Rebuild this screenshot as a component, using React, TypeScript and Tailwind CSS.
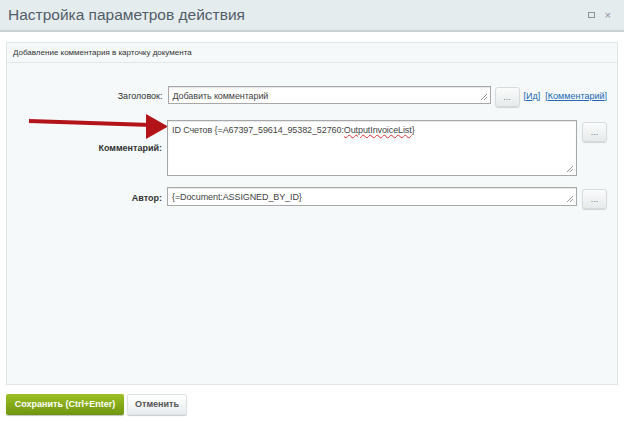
import React from "react";

const font = { fontFamily: '"Liberation Sans", Arial, sans-serif' };

function Grip() {
  return (
    <svg width="8" height="8" viewBox="0 0 8 8" className="absolute bottom-[2px] right-[2px]">
      <path d="M7 1 L1 7 M7 4 L4 7" stroke="#9a9a9a" strokeWidth="1" />
    </svg>
  );
}

function DotsButton() {
  return (
    <button className="flex h-[20px] w-[25px] shrink-0 items-center justify-center rounded-[3px] border border-[#d6dbdd] bg-gradient-to-b from-[#fbfcfc] to-[#e6eaeb] text-[9px] leading-none text-[#777] shadow-[0_1px_1px_rgba(0,0,0,0.15)]">
      ...
    </button>
  );
}

function Field({ h, children }: { h: string; children: React.ReactNode }) {
  return (
    <div
      className={`relative ${h} flex-1 border border-[#a8a8a8] bg-white px-[4px] pt-[3px] text-[9px] tracking-[-0.1px] text-[#444] shadow-[inset_0_1px_1px_rgba(0,0,0,0.1)]`}
    >
      {children}
      <Grip />
    </div>
  );
}

export default function App() {
  return (
    <div className="h-[421px] w-[624px] overflow-hidden bg-white" style={font}>
      {/* window header */}
      <div className="flex h-[32px] items-center justify-between border-b-2 border-[#c9d1d4] bg-[#e4ecee] pl-[8px] pr-[13px]">
        <span className="text-[15.5px] text-[#535c69]">Настройка параметров действия</span>
        <div className="flex items-center gap-[10px] text-[#8c9396]">
          <span className="block h-[6px] w-[7px] border border-[#8c9396]" />
          <span className="text-[11px] leading-none">×</span>
        </div>
      </div>

      <div className="px-[6px] pt-[10px]">
        <div className="h-[343px] border border-[#e1e7e9] bg-[#f5f9fa]">
          <div className="flex h-[20px] items-center border-b border-[#e1e7e9] pl-[6px] text-[8px] text-[#333]">
            Добавление комментария в карточку документа
          </div>

          <div className="relative flex flex-col pr-[10px] pt-[23px]">
            {/* red arrow */}
            <svg width="140" height="30" viewBox="0 0 140 30" className="absolute left-[22px] top-[50px]">
              <path d="M0 8 L122 12" stroke="#b3141a" strokeWidth="4" strokeLinecap="round" />
              <path d="M117 1 L139 13.5 L117 26 Z" fill="#b3141a" />
            </svg>

            <div className="flex items-start">
              <div className="w-[161px] pr-[5px] pt-[4px] text-right text-[9px] text-[#333]">Заголовок:</div>
              <div className="flex flex-1 items-start gap-[4px]">
                <div className="flex w-[323px]">
                  <Field h="h-[18px]">Добавить комментарий</Field>
                </div>
                <div className="mt-[1px]">
                  <DotsButton />
                </div>
                <div className="mt-[4px] flex gap-[5px] text-[9px] text-[#2067b0]">
                  <span>
                    [<span className="underline">Ид</span>]
                  </span>
                  <span>
                    [<span className="underline">Комментарий</span>]
                  </span>
                </div>
              </div>
            </div>

            <div className="mt-[13px] flex items-start">
              <div className="w-[160px] pr-[5px] pt-[22px] text-right text-[9px] font-bold text-[#333]">
                Комментарий:
              </div>
              <div className="flex flex-1 items-start gap-[5px]">
                <Field h="h-[56px]">
                  ID Счетов {"{=A67397_59614_95382_52760:"}
                  <span className="underline decoration-[#e03030] decoration-wavy">OutputInvoiceList</span>
                  {"}"}
                </Field>
                <div className="mt-[2px]">
                  <DotsButton />
                </div>
              </div>
            </div>

            <div className="mt-[11px] flex items-start">
              <div className="w-[160px] pr-[5px] pt-[5px] text-right text-[9px] font-bold text-[#333]">Автор:</div>
              <div className="flex flex-1 items-start gap-[5px]">
                <Field h="h-[19px]">{"{=Document:ASSIGNED_BY_ID}"}</Field>
                <div className="mt-[2px]">
                  <DotsButton />
                </div>
              </div>
            </div>
          </div>
        </div>

        <div className="mt-[9px] flex gap-[3px]">
          <button className="h-[21px] w-[118px] rounded-[2px] bg-gradient-to-b from-[#9dc123] to-[#6f9510] text-[9px] font-bold text-white shadow-[0_1px_1px_rgba(0,0,0,0.25)]">
            Сохранить (Ctrl+Enter)
          </button>
          <button className="h-[21px] w-[60px] rounded-[2px] border border-[#dde2e4] bg-gradient-to-b from-white to-[#e8ecee] text-[9px] font-bold text-[#555] shadow-[0_1px_1px_rgba(0,0,0,0.2)]">
            Отменить
          </button>
        </div>
      </div>
    </div>
  );
}
